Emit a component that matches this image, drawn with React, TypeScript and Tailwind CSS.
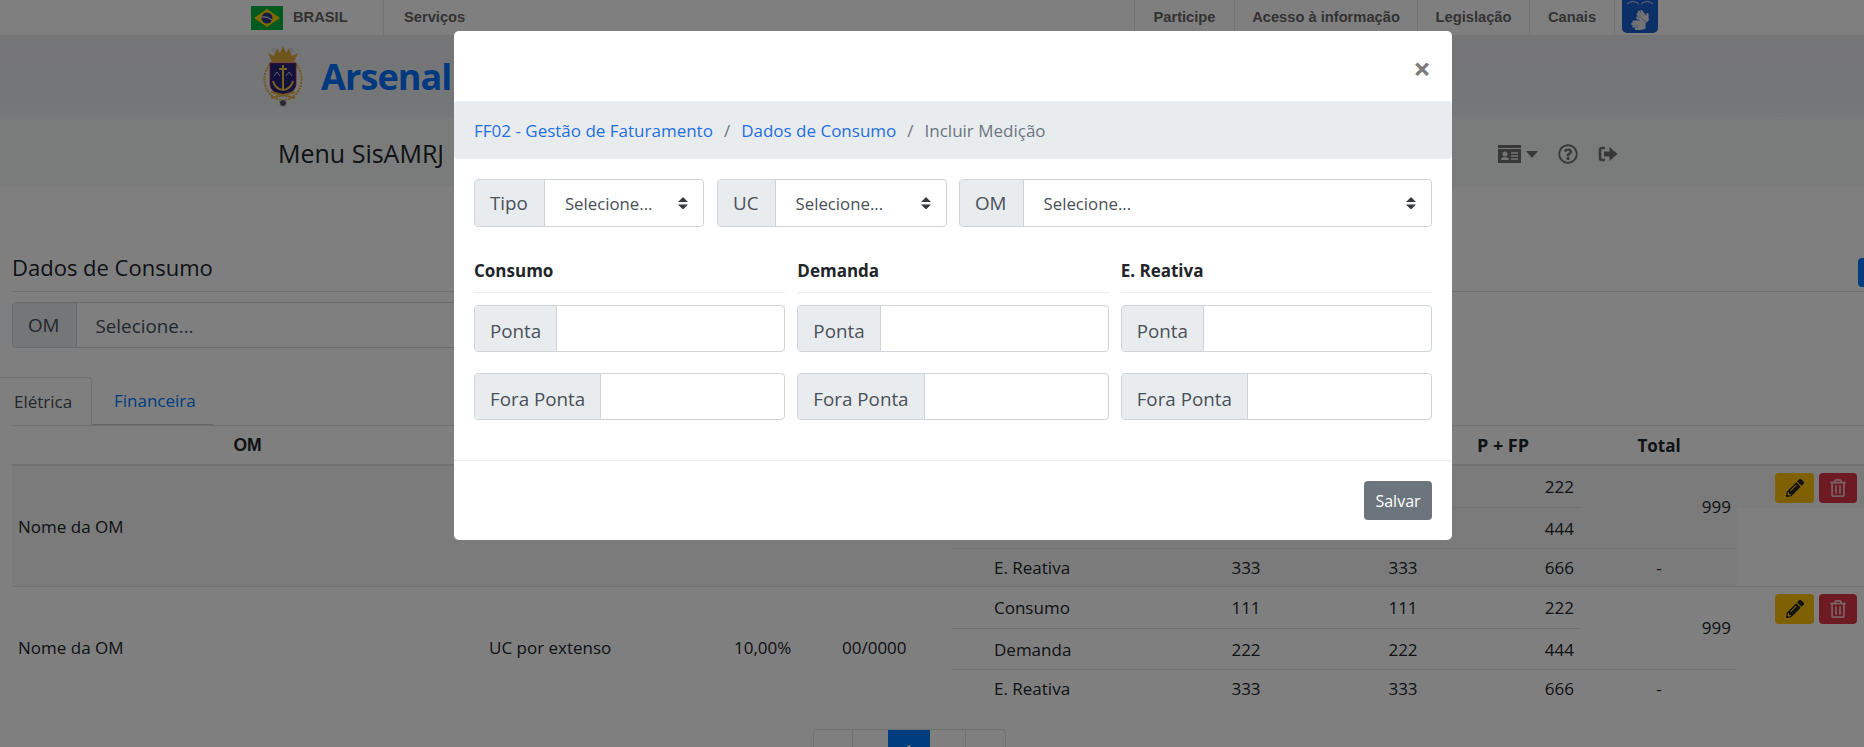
import { FaPencilAlt, FaRegTrashAlt, FaRegQuestionCircle, FaSignLanguage } from "react-icons/fa";

const LINHAS = [
  { nome: "Consumo", a: "111", b: "111", c: "222" },
  { nome: "Demanda", a: "222", b: "222", c: "444" },
  { nome: "E. Reativa", a: "333", b: "333", c: "666" },
];

function Bandeira() {
  return (
    <svg width="32" height="24" viewBox="0 0 32 24" className="shrink-0">
      <rect width="32" height="24" fill="#00b33c" />
      <path d="M16 3 L29 12 L16 21 L3 12 Z" fill="#ffd400" />
      <circle cx="16" cy="12" r="5.5" fill="#2a3a8c" />
      <path d="M10.8 10.8 Q16 10 21 14" stroke="#fff" strokeWidth="1" fill="none" />
    </svg>
  );
}

function Brasao() {
  return (
    <svg width="42" height="62" viewBox="0 0 42 62" className="shrink-0">
      <ellipse cx="21" cy="33" rx="18.5" ry="21" fill="none" stroke="#e0b040" strokeWidth="2" strokeDasharray="2 1" />
      <path d="M6 7 L12 10 L15 2 L18 7 L21 0 L24 7 L27 2 L30 10 L36 7 L32 16 L10 16 Z" fill="#e0a93a" />
      <circle cx="12" cy="4" r="2.5" fill="#d8d8e8" />
      <circle cx="30" cy="4" r="2.5" fill="#d8d8e8" />
      <path d="M8 17 H34 V38 Q34 46 21 50 Q8 46 8 38 Z" fill="#24247a" stroke="#c02030" strokeWidth="0.8" />
      <path d="M21 19 V43 M17 23 H25 M11 35 Q13 43 21 44 Q29 43 31 35" stroke="#f0c040" strokeWidth="2" fill="none" />
      <path d="M12 30 l3 -4 l3 4 M24 30 l3 -4 l3 4" stroke="#b8b8d0" strokeWidth="1" fill="none" />
      <path d="M9 52 L33 46 M33 52 L9 46" stroke="#e0b040" strokeWidth="2" />
      <circle cx="21" cy="57" r="3.5" fill="#555" stroke="#ddd" strokeWidth="1" />
    </svg>
  );
}

function IconeCartao() {
  return (
    <svg width="23" height="18" viewBox="0 0 23 18">
      <rect width="23" height="3" fill="#707070" />
      <rect y="4" width="23" height="14" fill="#707070" />
      <circle cx="7" cy="9" r="2.5" fill="#e8e8e8" />
      <path d="M3 15 Q3 12 7 12 Q11 12 11 15 Z" fill="#e8e8e8" />
      <path d="M13 8 H20 M13 11 H20 M13 14 H20" stroke="#e8e8e8" strokeWidth="1.3" />
    </svg>
  );
}

function IconeSair() {
  return (
    <svg width="20" height="18" viewBox="0 0 20 18">
      <path d="M7 3 H4 Q2 3 2 5 V13 Q2 15 4 15 H7" stroke="#707070" strokeWidth="2.6" fill="none" />
      <path d="M6 6.5 H11.5 V2 L19.5 9 L11.5 16 V11.5 H6 Z" fill="#707070" />
    </svg>
  );
}

function SetasSelect() {
  return (
    <svg width="10" height="12.5" viewBox="0 0 4 5" className="shrink-0">
      <path d="M2 0L0 2h4zm0 5L0 3h4z" fill="#343a40" />
    </svg>
  );
}

function GrupoSelect({ rotulo, className }: { rotulo: string; className: string }) {
  return (
    <div className={`flex h-[48px] border border-[#ced4da] rounded-[4px] overflow-hidden bg-white ${className}`}>
      <div className="flex items-center pl-[15px] pr-[16px] pt-[1px] bg-[#e9ecef] border-r border-[#ced4da] text-[#495057] text-[18.8px]">{rotulo}</div>
      <div className="flex-1 flex items-center justify-between pl-[20px] pr-[15px] text-[#495057] text-[16.8px]">
        <span className="pt-[1px]">Selecione...</span>
        <SetasSelect />
      </div>
    </div>
  );
}

function GrupoInput({ rotulo }: { rotulo: string }) {
  return (
    <div className="flex h-[47px] border border-[#ced4da] rounded-[4px] overflow-hidden bg-white">
      <div className="flex items-center px-[15px] pt-[5px] bg-[#e9ecef] border-r border-[#ced4da] text-[#495057] text-[18.8px]">{rotulo}</div>
      <input className="flex-1 min-w-0 outline-none" />
    </div>
  );
}

function ColunaMedicao({ titulo }: { titulo: string }) {
  return (
    <div className="flex-1">
      <h6 className="h-[42px] flex items-center font-bold text-[17px] text-[#212529] border-b border-[#e9ecef] mt-[1px] pb-[1px]">{titulo}</h6>
      <div className="mt-[12px] flex flex-col gap-[21px]">
        <GrupoInput rotulo="Ponta" />
        <GrupoInput rotulo="Fora Ponta" />
      </div>
    </div>
  );
}

function LinhaMedida({ nome, a, b, c, altura }: { nome: string; a: string; b: string; c: string; altura: string }) {
  return (
    <div className={`flex items-center pt-[1px] ${altura}`}>
      <div className="w-[263px] pl-[42px]">{nome}</div>
      <div className="w-[62px] text-center">{a}</div>
      <div className="w-[95px]" />
      <div className="w-[62px] text-center">{b}</div>
      <div className="flex-1 text-right pr-[7px]">{c}</div>
    </div>
  );
}

function LinhaOM({ listrada }: { listrada: boolean }) {
  return (
    <div className={`flex text-[17px] text-[#212529] ${listrada ? "border-b border-[#dee2e6]" : ""}`}>
      <div className={`flex w-[1725px] shrink-0 ${listrada ? "bg-[#f5f7f5]" : ""}`}>
        <div className="w-[471px] pl-[6px] pt-[2px] flex items-center">Nome da OM</div>
        <div className="w-[245px] pl-[6px] pt-[2px] flex items-center">{listrada ? "" : "UC por extenso"}</div>
        <div className="w-[114px] pl-[6px] pt-[2px] flex items-center">{listrada ? "" : "10,00%"}</div>
        <div className="w-[110px] pt-[2px] flex items-center">{listrada ? "" : "00/0000"}</div>
        <div className="w-[785px] shrink-0">
          <div className="flex">
            <div className="w-[629px]">
              <LinhaMedida {...LINHAS[0]} altura="h-[42px] border-b border-[#dee2e6]" />
              <LinhaMedida {...LINHAS[1]} altura="h-[40px]" />
            </div>
            <div className="flex-1 flex items-center justify-end pr-[6px]">999</div>
          </div>
          <div className="flex border-t border-[#dee2e6]">
            <div className="w-[629px]">
              <LinhaMedida {...LINHAS[2]} altura="h-[37px]" />
            </div>
            <div className="flex-1 flex items-center justify-center">-</div>
          </div>
        </div>
      </div>
      <div className="flex-1 min-w-0">
        <div className={`h-[42px] pt-[7px] pl-[38px] flex items-start gap-[5px] ${listrada ? "bg-[#f5f7f5]" : ""}`}>
          <button className="w-[39px] h-[30px] rounded-[4px] bg-[#ffc107] flex items-center justify-center text-[#212529]">
            <FaPencilAlt size={18} />
          </button>
          <button className="w-[38px] h-[30px] rounded-[4px] bg-[#dc3545] flex items-center justify-center text-white/70">
            <FaRegTrashAlt size={18} />
          </button>
        </div>
      </div>
    </div>
  );
}

export default function App() {
  return (
    <div className="relative h-[747px] overflow-hidden bg-white font-['Open_Sans',sans-serif]">
      {/* barra do governo */}
      <div className="h-[36px] border-b border-[#e6e6e6] flex items-center font-['Liberation_Sans',sans-serif] font-bold text-[14.7px] text-[#666666]">
        <div className="pl-[251px] flex items-center w-[384px] h-full border-r border-[#e6e6e6]">
          <Bandeira />
          <span className="ml-[10px]">BRASIL</span>
        </div>
        <span className="ml-[20px]">Serviços</span>
        <div className="ml-auto flex items-center h-full pr-[206px]">
          <div className="w-[100px] h-full border-l border-[#e6e6e6] flex items-center justify-center">Participe</div>
          <div className="w-[183px] h-full border-l border-[#e6e6e6] flex items-center justify-center">Acesso à informação</div>
          <div className="w-[112px] h-full border-l border-[#e6e6e6] flex items-center justify-center">Legislação</div>
          <div className="w-[85px] h-full border-l border-[#e6e6e6] flex items-center justify-center">Canais</div>
          <div className="h-full border-l border-[#e6e6e6] pl-[7px]">
            <div className="relative w-[36px] h-[33px] bg-[#1660d0] rounded-b-[5px] flex items-center justify-center text-[#e8e8e8] pt-[7px]">
              <svg width="30" height="6" viewBox="0 0 30 6" className="absolute top-0 left-[3px]">
                <path d="M2 4 Q8 -1 14 4 M16 4 Q22 -1 28 4" stroke="#c8d0e0" strokeWidth="1" fill="none" />
              </svg>
              <FaSignLanguage size={20} />
            </div>
          </div>
        </div>
      </div>

      {/* cabecalho */}
      <div className="h-[81px] bg-gradient-to-b from-[#e9eaee] to-[#eceef1] flex items-center pl-[262px]">
        <Brasao />
        <span className="ml-[17px] text-[36px] tracking-[-0.9px] font-bold text-[#0073ff]">Arsenal</span>
      </div>

      {/* menu */}
      <div className="h-[70px] bg-[#f4f7f6] flex items-center pl-[278px] pt-[4px]">
        <span className="text-[25px] text-[#212529]">Menu SisAMRJ</span>
        <div className="ml-auto flex items-center pr-[246px]">
          <IconeCartao />
          <svg width="12" height="7" viewBox="0 0 12 7" className="ml-[5px]">
            <path d="M0 0 H12 L6 7 Z" fill="#707070" />
          </svg>
          <FaRegQuestionCircle size={20} className="ml-[20px] text-[#707070]" />
          <span className="ml-[20px]"><IconeSair /></span>
        </div>
      </div>

      {/* conteudo */}
      <div className="pl-[12px] pt-[66px]">
        <div className="relative h-[39px] pb-[10px] border-b border-[#dee2e6] flex items-center">
          <h5 className="text-[22px] text-[#212529]">Dados de Consumo</h5>
          <div className="absolute right-0 top-[5px] w-[6px] h-[29px] bg-[#007bff] rounded-l-[4px]" />
        </div>

        <div className="mt-[10px] w-[1000px] h-[46px] flex border border-[#ced4da] rounded-[4px] overflow-hidden">
          <div className="flex items-center pl-[15px] pr-[16px] pt-[1px] bg-[#e9ecef] border-r border-[#ced4da] text-[#495057] text-[18.8px]">OM</div>
          <div className="flex items-center pl-[19px] pt-[3px] text-[#495057] text-[18.8px]">Selecione...</div>
        </div>

        <div className="mt-[28px] -ml-[12px] h-[49px] pt-[1px] flex text-[17px]">
          <div className="w-[92px] border-t border-r border-[#dee2e6] rounded-tr-[4px] pl-[14px] pt-[1px] flex items-center text-[#495057]">Elétrica</div>
          <div className="w-[121px] border-b border-[#c8ccd0] pl-[22px] pt-[1px] flex items-center text-[#007bff]">Financeira</div>
        </div>

        <div className="border-t border-[#dee2e6]">
          <div className="h-[40px] pt-[1px] flex items-center border-b-2 border-[#dee2e6] font-bold text-[17px] text-[#212529]">
            <div className="w-[471px] text-center font-['Liberation_Sans',sans-serif] text-[17.5px]">OM</div>
            <div className="ml-[975px] w-[90px] text-center text-[18px]">P + FP</div>
            <div className="ml-[81px] w-[60px] text-center">Total</div>
          </div>
          <LinhaOM listrada />
          <LinhaOM listrada={false} />
        </div>

        <div className="mt-[22px] ml-[801px] w-[193px] h-[40px] flex border border-[#dee2e6] rounded-[4px] overflow-hidden text-[17px]">
          <div className="w-[39px] border-r border-[#dee2e6]" />
          <div className="w-[35px]" />
          <div className="w-[42px] bg-[#007bff] text-white text-center pt-[8px]">1</div>
          <div className="w-[36px] border-r border-[#dee2e6]" />
        </div>
      </div>

      {/* modal */}
      <div className="fixed inset-0 bg-black/50">
        <div className="ml-[454px] mt-[31px] w-[998px] h-[509px] bg-white rounded-[5px] flex flex-col">
          <div className="h-[70px] shrink-0 flex justify-end items-center pr-[21px] pt-[4px]">
            <span className="text-[31px] font-bold leading-none text-[#7a7a7a]">×</span>
          </div>
          <nav className="h-[58px] shrink-0 bg-[#e9ecef] rounded-[4px] flex items-center pl-[20px] pt-[2px] text-[17px]">
            <span className="text-[#1f6fe0]">FF02 - Gestão de Faturamento</span>
            <span className="px-[11px] text-[#6c757d]">/</span>
            <span className="text-[#1f6fe0]">Dados de Consumo</span>
            <span className="px-[11px] text-[#6c757d]">/</span>
            <span className="text-[#6c757d]">Incluir Medição</span>
          </nav>
          <div className="flex-1 px-[20px] pt-[20px] border-b border-[#e9ecef]">
            <div className="flex">
              <GrupoSelect rotulo="Tipo" className="w-[230px] mr-[13px]" />
              <GrupoSelect rotulo="UC" className="w-[230px] mr-[12px]" />
              <GrupoSelect rotulo="OM" className="flex-1" />
            </div>
            <div className="mt-[23px] flex gap-[12px]">
              <ColunaMedicao titulo="Consumo" />
              <ColunaMedicao titulo="Demanda" />
              <ColunaMedicao titulo="E. Reativa" />
            </div>
          </div>
          <div className="h-[79px] shrink-0 flex justify-end items-center pr-[20px]">
            <button className="w-[68px] h-[39px] rounded-[4px] bg-[#6c757d] text-white text-[16px]">Salvar</button>
          </div>
        </div>
      </div>
    </div>
  );
}
